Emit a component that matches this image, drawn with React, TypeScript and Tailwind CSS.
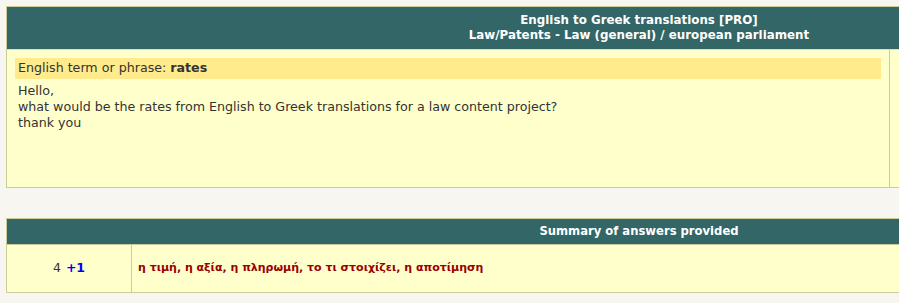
import React from "react";

export default function App() {
  return (
    <div
      className="w-[899px] h-[303px] overflow-hidden bg-[#f7f6f1] text-[12.65px] text-[#333]"
      style={{ fontFamily: '"DejaVu Sans", Verdana, sans-serif' }}
    >
      <div className="pl-[6px] pt-[6px] w-[1300px]">
        {/* Question table */}
        <div className="w-[1266px] border border-[#cccc99] bg-[#ffffcc]">
          <div className="h-[43px] bg-[#336666] border-b border-[#e0e0b0] flex flex-col items-center justify-center text-white font-bold text-[11.85px] leading-[15px]">
            <div>English to Greek translations [PRO]</div>
            <div>Law/Patents - Law (general) / european parliament</div>
          </div>
          <div className="flex h-[137px]">
            <div className="w-[883px] border-r border-[#cccc99] px-[8px] pt-[8px]">
              <div className="h-[21px] bg-[#ffeb8c] pl-[3px] flex items-center">
                English term or phrase:&nbsp;<span className="font-bold">rates</span>
              </div>
              <div className="mt-[4px] pl-[3px] leading-[16px]">
                <div>Hello,</div>
                <div>what would be the rates from English to Greek translations for a law content project?</div>
                <div>thank you</div>
              </div>
            </div>
            <div className="flex-1" />
          </div>
        </div>

        {/* Summary table */}
        <div className="mt-[30px] w-[1266px] border border-[#cccc99] bg-[#ffffcc]">
          <div className="h-[26px] bg-[#336666] border-b border-[#cccc99] flex items-center justify-center text-white font-bold text-[11.6px]">
            Summary of answers provided
          </div>
          <div className="flex h-[47px] text-[11px]">
            <div className="w-[125px] border-r border-[#cccc99] flex items-center justify-center text-[12.5px]">
              <span>4</span>
              <span className="ml-[5px] font-bold text-[#0000ff]">+1</span>
            </div>
            <div className="flex-1 flex items-center pl-[6px] font-bold text-[#990000]">
              η τιμή, η αξία, η πληρωμή, το τι στοιχίζει, η αποτίμηση
            </div>
          </div>
        </div>
      </div>
    </div>
  );
}
